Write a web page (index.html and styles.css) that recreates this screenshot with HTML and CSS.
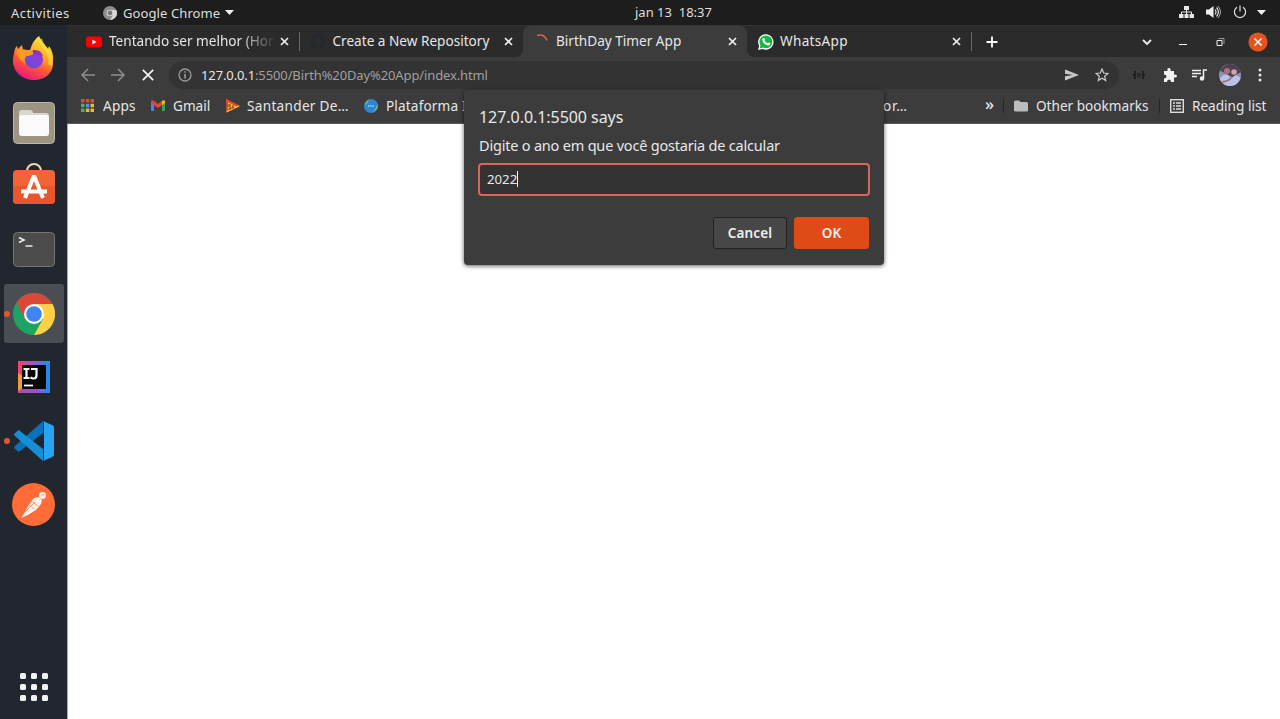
FILE: index.html
```html
<!DOCTYPE html>
<html lang="pt">
<head>
<meta charset="utf-8">
<title>BirthDay Timer App</title>
<link rel="stylesheet" href="styles.css">
</head>
<body>
<header class="topbar">
  <span class="activities">Activities</span>
  <div class="appmenu">
    <svg width="14" height="14" viewBox="0 0 14 14"><circle cx="7" cy="7" r="7" fill="#8c8c8c"/><path d="M7 4h6.3A7 7 0 0 1 7 14l3-5z" fill="#d8d8d8"/><circle cx="7" cy="7" r="3.300" fill="#ddd"/><circle cx="7" cy="7" r="2.400" fill="#777"/></svg>
    <span class="appname">Google Chrome</span>
    <svg width="9" height="5" viewBox="0 0 9 5"><path d="M0 0h9L4.500 5z" fill="#eee"/></svg>
  </div>
  <span class="clock">jan 13&nbsp; 18:37</span>
  <div class="status">
    <svg width="15" height="14" viewBox="0 0 15 14" fill="#e8e8e8"><path d="M5 1h5v4H5zM0 9h4.500v4H0zM5.500 9h4v4h-4zM10.500 9H15v4h-4.500z"/><path d="M7.500 5v4M2.500 9V7h10v2" fill="none" stroke="#e8e8e8"/></svg>
    <svg width="15" height="14" viewBox="0 0 15 14"><path d="M0 4.500h3L7.500 1v12L3 9.500H0z" fill="#eee"/><path d="M9 4.500q2 2.500 0 5M10.500 2.500q4 4.500 0 9" fill="none" stroke="#e0e0e0" stroke-width="1.200"/><path d="M12 1q5 6 0 12" fill="none" stroke="#aaa"/></svg>
    <svg width="14" height="14" viewBox="0 0 14 14" fill="none" stroke="#ddd" stroke-width="1.200"><path d="M4 2.200a5.600 5.600 0 1 0 6 0M7 .5v6"/></svg>
    <svg class="caret" width="9" height="5" viewBox="0 0 9 5"><path d="M0 0h9L4.500 5z" fill="#eee"/></svg>
  </div>
</header>
<div class="desktop">
  <nav class="dock">
    <div class="tile">
      <svg width="44" height="44" viewBox="0 0 44 44">
        <defs>
          <linearGradient id="fox" x1=".8" y1="0" x2=".35" y2="1"><stop offset="0" stop-color="#fff040"/><stop offset=".38" stop-color="#ffad20"/><stop offset=".68" stop-color="#ff5436"/><stop offset="1" stop-color="#e8177e"/></linearGradient>
          <linearGradient id="globe" x1="0" y1="1" x2="1" y2="0"><stop offset="0" stop-color="#5552d4"/><stop offset="1" stop-color="#a934e3"/></linearGradient>
        </defs>
        <path d="M2 17Q3 11 5 10l1 3 4-4 1 5h7q3-10 9-14 2 5 5 8l4 5 1-3q5 7 4 15C42 37 33 44 22 44S0 36 1 23z" fill="url(#fox)"/>
        <circle cx="22" cy="23.500" r="9" fill="url(#globe)"/>
        <path d="M5 15q5-3 10-1l7 2q1 3-7 4c-3 1-3 5-1 8-6-3-9-8-9-13z" fill="#ff9b22"/>
        <path d="M21 14q8-1 10 6l-2-1q2 3 1 6-3-7-9-7z" fill="#8a36c8"/>
        <path d="M28 3q2 7 7 11 5 7 3 15" fill="none" stroke="#ffe044" stroke-width="4" opacity=".65"/>
      </svg>
    </div>
    <div class="tile">
      <svg width="42" height="42" viewBox="0 0 42 42"><rect x=".5" y=".5" width="41" height="41" rx="4" fill="#9b9582" stroke="#bbb6a6"/><path d="M6 11q0-3 3-3h8q3 0 3 3h13q3 0 3 3v17q0 3-3 3H9q-3 0-3-3z" fill="#d9d6cc"/><rect x="6" y="13" width="30" height="21" rx="3" fill="#fafafa"/></svg>
    </div>
    <div class="tile bag">
      <svg width="42" height="42" viewBox="0 0 42 42"><path d="M14 10V8a7 7 0 0 1 14 0v2" fill="none" stroke="#e8dcae" stroke-width="2"/><rect y="7" width="42" height="34" rx="4" fill="#f26335"/><path d="M0 23h42v14a4 4 0 0 1-4 4H4a4 4 0 0 1-4-4z" fill="#e9562b"/><path d="M12 35l8.500-21h1L30 35M8 28.500h26" fill="none" stroke="#fff" stroke-width="4"/></svg>
    </div>
    <div class="tile">
      <svg width="42" height="35" viewBox="0 0 42 35"><rect x=".5" y=".5" width="41" height="34" rx="4" fill="#4b4b4b" stroke="#747474"/><path d="M6 5.500l5 2.500-5 2.500M12.500 14h7" fill="none" stroke="#eee" stroke-width="1.600"/></svg>
    </div>
    <div class="tile active">
      <i class="dot"></i>
      <svg width="42" height="42" viewBox="0 0 42 42"><circle cx="21" cy="21" r="21" fill="#1da462"/><path d="M21 11h18.500A21 21 0 0 1 21 42l9-16z" fill="#fdd047"/><path d="M3.500 9.500L12 26l9-15h18.500A21 21 0 0 0 3.500 9.500z" fill="#d94838"/><circle cx="21" cy="21" r="10" fill="#fff"/><circle cx="21" cy="21" r="7.800" fill="#4084f3"/></svg>
    </div>
    <div class="tile">
      <svg width="32" height="32" viewBox="0 0 32 32"><defs><linearGradient id="ij"><stop offset="0" stop-color="#fe3c71"/><stop offset=".5" stop-color="#9b57c9"/><stop offset="1" stop-color="#168ff0"/></linearGradient></defs><path d="M0 0h32v32H0z" fill="url(#ij)"/><path d="M0 12l5 3v12l-5 3z" fill="#f39b2d"/><path d="M3 28h12l10 4H0z" fill="#a151bd"/><path d="M4 4h24v24H4z" fill="#080808"/><path d="M5.500 8h6M8.500 8v9M5.500 17h6M13 8h5.500v6.500q0 3-3 3-1.500 0-3-1.200" fill="none" stroke="#fff" stroke-width="2.200"/><path d="M6 24.500h9" stroke="#fff" stroke-width="1.800"/></svg>
    </div>
    <div class="tile">
      <i class="dot"></i>
      <svg width="40" height="40" viewBox="0 0 40 40"><path d="M0 27l4 3.500q1 .5 2-.5L29 12V0L1 25q-1 1-1 2z" fill="#0873ba"/><path d="M0 13l4-3.500q1-.5 2 .5l23 18v12L1 15q-1-1-1-2z" fill="#168fd5"/><path d="M29 0l9 4q2 1 2 2v28q0 1-2 2l-9 4q1-1 1-3V3q0-2-1-3z" fill="#27a5f2"/></svg>
    </div>
    <div class="tile">
      <svg width="43" height="43" viewBox="0 0 43 43"><circle cx="21.500" cy="21.500" r="21.500" fill="#ff6c37"/><circle cx="30.500" cy="12.500" r="3.400" fill="#fff1ea"/><path d="M22 15l5-1 3 3-1 4-5 6-5 3-3 2-7 3 4-6 3-6 3-4z" fill="#fff1ea"/><path d="M19 18l7 5M16.500 22l6 4M13 29l10-10M29.500 12.500l3-1" stroke="#f39a76"/></svg>
    </div>
    <div class="appgrid"><i></i><i></i><i></i><i></i><i></i><i></i><i></i><i></i><i></i></div>
  </nav>
  <main class="browser">
    <div class="tabs">
      <div class="tab">
        <svg width="16" height="16" viewBox="0 0 16 16"><rect x="0" y="2.500" width="16" height="11" rx="3" fill="#f00"/><path d="M6.300 5.500v5l4.200-2.500z" fill="#fff"/></svg>
        <span class="title fade t1">Tentando ser melhor (Hor</span>
        <svg class="x" width="9" height="9" viewBox="0 0 9 9"><path d="M1 1l7 7M8 1L1 8"/></svg>
      </div>
      <div class="tab divided before">
        <svg width="16" height="16" viewBox="0 0 16 16"><path d="M6 14.500v-3q-4-1-3-5l1-4 2 1h4l2-1 1 4q1 4-3 5v3A7 7 0 1 0 6 14.500" fill="none" stroke="#24292f" stroke-width="1.500"/></svg>
        <span class="title t2">Create a New Repository</span>
        <svg class="x" width="9" height="9" viewBox="0 0 9 9"><path d="M1 1l7 7M8 1L1 8"/></svg>
      </div>
      <div class="slot"><div class="tab current">
        <svg width="16" height="16" viewBox="0 0 16 16"><path d="M3 1.500q7-2 10 5" fill="none" stroke="#e0605a" stroke-width="1.600"/></svg>
        <span class="title t3">BirthDay Timer App</span>
        <svg class="x" width="9" height="9" viewBox="0 0 9 9"><path d="M1 1l7 7M8 1L1 8"/></svg>
      </div></div>
      <div class="tab after">
        <svg width="16" height="16" viewBox="0 0 16 16"><path d="M0 16l1.200-4A7.700 7.700 0 1 1 4.500 15z" fill="#fff"/><path d="M1.700 14.400l.8-3A6.400 6.400 0 1 1 5 13.600z" fill="#12b93e"/><path d="M5 4q1-.6 1.600.5.6 1.400 0 2 1 2 3 2.700l1-.8 1.800 1q-.2 2-2.300 2Q5 10.500 4.300 6 4.200 4.500 5 4z" fill="#fff"/></svg>
        <span class="title t4">WhatsApp</span>
        <svg class="x" width="9" height="9" viewBox="0 0 9 9"><path d="M1 1l7 7M8 1L1 8"/></svg>
      </div>
      <div class="newtab"><svg width="12" height="12" viewBox="0 0 12 12"><path d="M6 .5v11M.5 6h11" stroke="#fff" stroke-width="1.800"/></svg></div>
      <div class="winctl">
        <svg width="10" height="10" viewBox="0 0 10 10"><path d="M1 3l4 4 4-4" fill="none" stroke="#eee" stroke-width="1.800"/></svg>
        <svg width="8" height="10" viewBox="0 0 8 10"><path d="M0 7.500h8" stroke="#fff"/></svg>
        <svg width="9" height="10" viewBox="0 0 9 10" fill="none"><path d="M1 3.500h5v5H1z" stroke="#eee"/><path d="M2.500 1.500h5.500V7" stroke="#999"/></svg>
        <svg width="20" height="20" viewBox="0 0 20 20"><circle cx="10" cy="10" r="9.600" fill="#e35420"/><path d="M6.500 6.500l7 7M13.500 6.500l-7 7" stroke="#fff" stroke-width="1.500"/></svg>
      </div>
    </div>
    <div class="toolbar">
      <div class="navbtns">
        <svg width="14" height="14" viewBox="0 0 14 14" fill="none" stroke="#8e8e8e" stroke-width="1.500"><path d="M14 7H1.500M7 1L1 7l6 6"/></svg>
        <svg width="14" height="14" viewBox="0 0 14 14" fill="none" stroke="#8e8e8e" stroke-width="1.500"><path d="M0 7h12.500M7 1l6 6-6 6"/></svg>
        <svg width="12" height="12" viewBox="0 0 12 12" stroke="#f4f4f4" stroke-width="1.700"><path d="M.8.800l10.400 10.400M11.200.800L.8 11.200"/></svg>
      </div>
      <div class="omnibox">
        <svg width="14" height="14" viewBox="0 0 14 14"><circle cx="7" cy="7" r="6" fill="none" stroke="#9b9b9b" stroke-width="1.300"/><path d="M7 6v4.500M7 3.300v1.500" stroke="#aaa" stroke-width="1.400"/></svg>
        <span class="url"><b>127.0.0.1</b><span>:5500/Birth%20Day%20App/index.html</span></span>
        <svg class="send" width="14" height="12" viewBox="0 0 14 12"><path d="M0 .5L14 6 0 11.500V7.300L8 6 0 4.700z" fill="#c8c8c8"/></svg>
        <svg width="14" height="14" viewBox="0 0 14 14"><path d="M7 1l1.700 4 4.300.4-3.300 2.800 1 4.300L7 10.200l-3.700 2.300 1-4.300L1 5.400 5.300 5z" fill="none" stroke="#ccc" stroke-width="1.200"/></svg>
      </div>
      <div class="ext">
        <svg width="12" height="8" viewBox="0 0 12 8" fill="none" stroke="#141414" stroke-width="1.200"><path d="M3 .6H2V3.300L.5 4 2 4.700v2.700h1M9 .6h1v2.700l1.500.7-1.500.7v2.700H9M4 3h4M4 5h4"/></svg>
        <svg width="14" height="14" viewBox="0 0 14 14"><path d="M1 3h3.500q-.6-3 1.500-3t1.500 3H11v3.500q3-.4 3 1.500t-3 1.500V14H8q0-2.500-2-2.500T4 14H1v-3.500q2.500 0 2.500-2T1 6.500z" fill="#f1f1f1"/></svg>
        <svg width="15" height="12" viewBox="0 0 15 12"><path d="M0 1.500h9M0 4.500h9M0 7.500h5M11.500 9.500V1H15" fill="none" stroke="#eee" stroke-width="1.500"/><circle cx="10" cy="9.500" r="2.200" fill="#eee"/></svg>
        <svg class="avatar" width="22" height="22" viewBox="0 0 22 22"><path d="M0 0h22v22H0z" fill="#8f91b4"/><path d="M0 6l8-6h10l4 8-9 5z" fill="#533e50"/><circle cx="8" cy="7" r="3" fill="#a87578"/><circle cx="15" cy="8" r="2.800" fill="#d0a5a5"/><path d="M1 14q4-5 8-3l3 4 5-4 5 3v8H0z" fill="#b9c2ea"/><path d="M3 18q7-1 9-4" fill="none" stroke="#a97581" stroke-width="2"/></svg>
        <svg width="4" height="14" viewBox="0 0 4 14" fill="#e5e5e5"><circle cx="2" cy="2" r="1.500"/><circle cx="2" cy="7" r="1.500"/><circle cx="2" cy="12" r="1.500"/></svg>
      </div>
    </div>
    <div class="bookmarks">
      <svg class="apps" width="13" height="13" viewBox="0 0 13 13"><path d="M0 0h3.500v3.500H0zM4.800 0h3.500v3.500H4.800zM9.500 0H13v3.500H9.500z" fill="#e3493c"/><path d="M0 4.800h3.500v3.500H0zM0 9.500h3.500V13H0z" fill="#4fae5c"/><path d="M4.800 4.800h3.500v3.500H4.800z" fill="#4794ef"/><path d="M9.500 4.800H13v3.500H9.500zM4.800 9.500h3.500V13H4.800zM9.500 9.500H13V13H9.500z" fill="#ecb643"/></svg>
      <span class="b1">Apps</span>
      <svg class="gm" width="14" height="11" viewBox="0 0 14 11"><path d="M0 2l3 2v7H1q-1 0-1-1z" fill="#4285f4"/><path d="M14 2l-3 2v7h2q1 0 1-1z" fill="#34a853"/><path d="M0 2Q0-1 3 1l4 3 4-3q3-2 3 1v1L7 8 0 3z" fill="#ea4335"/><path d="M11 1q3-2 3 1v1l-3 2z" fill="#fbbc04"/></svg>
      <span class="b2">Gmail</span>
      <svg class="sa" width="14" height="14" viewBox="0 0 14 14"><path d="M0 0l14 7L0 14z" fill="#c9682b"/><path d="M0 0l14 7-3 1.500L0 3z" fill="#e84a23"/><path d="M2 4l8 4M1 12.500L13 7M1 9.500l6-3" stroke="#f2cf38" stroke-width="1.300"/><path d="M1 4v7M4 5v6M7 6v4" stroke="#9b382a"/></svg>
      <span class="b3">Santander De…</span>
      <svg class="pl" width="14" height="14" viewBox="0 0 14 14"><circle cx="7" cy="7" r="7" fill="#2e86d3"/><path d="M5 .5q-4 2-4 6 3-2 4-6zM13.200 5q2 5-4.500 8.500 3.500-4 4.500-8.500z" fill="#6bbd79"/><path d="M4 7h6" stroke="#7cc3ee" stroke-width="2" stroke-dasharray="1.500 .7"/></svg>
      <span class="b4">Plataforma I</span>
      <span class="b5">or…</span>
      <span class="more">»</span>
      <i class="vsep"></i>
      <svg class="fo" width="14" height="12" viewBox="0 0 14 12"><path d="M0 2q0-1.500 1.500-1.500H5L6.500 2h6Q14 2 14 3.500v6.800q0 1.200-1.500 1.200h-11Q0 11.500 0 10.300z" fill="#bdbdbd"/></svg>
      <span class="b6">Other bookmarks</span>
      <i class="vsep"></i>
      <svg class="rl" width="14" height="14" viewBox="0 0 14 14" fill="none" stroke="#ddd"><rect x=".7" y=".7" width="12.600" height="12.600" stroke-width="1.400"/><path d="M3 4h2M3 7h2M3 10h2M6 4h5M6 7h5M6 10h5" stroke-width="1.400"/></svg>
      <span class="b7">Reading list</span>
    </div>
    <section class="page"></section>
    <div class="dialog" role="dialog">
      <h1>127.0.0.1:5500 says</h1>
      <p>Digite o ano em que você gostaria de calcular</p>
      <div class="field"><span>2022</span><i></i></div>
      <div class="actions"><button class="cancel">Cancel</button><button class="ok">OK</button></div>
    </div>
  </main>
</div>
</body>
</html>
```

FILE: styles.css
```css
* { box-sizing: border-box; }
body { margin: 0; width: 1280px; height: 719px; overflow: hidden; display: flex; flex-direction: column; background: #fff; color: #e6e6e6; font: 13.600px/20px "Noto Sans", "Open Sans", sans-serif; white-space: nowrap; }
svg { display: block; flex: none; }
.topbar { height: 25px; flex: none; background: #1d1d1d; display: grid; grid-template-columns: 103px 532px 1fr auto; align-items: center; font-size: 13px; color: #dedede; }
.activities { padding-left: 11px; letter-spacing: .45px; }
.appmenu { display: flex; align-items: center; }
.appname { width: 102px; margin-left: 6px; letter-spacing: .1px; }
.clock { padding-bottom: 1px; }
.status { display: flex; align-items: center; gap: 12px; padding: 0 14px 1px 0; }
.status .caret { margin-left: -2px; }

.desktop { flex: 1; display: flex; min-height: 0; }
.dock { width: 67px; flex: none; background: #22262f; display: flex; flex-direction: column; align-items: center; padding-top: 4px; gap: 4px; }
.tile { position: relative; width: 60px; height: 59.700px; display: grid; place-items: center; border-radius: 3px; }
.tile:first-child { padding-bottom: 2px; }
.bag { padding-bottom: 4px; }
.active { background: #4b4d54; }
.dot { position: absolute; left: 0; top: 27px; width: 6px; height: 6px; border-radius: 50%; background: #e5562c; }
.appgrid { margin: auto 0 18px; display: grid; grid-template-columns: repeat(3, 6px); grid-auto-rows: 6px; gap: 5px; }
.appgrid i { border-radius: 1.500px; background: #f2f2f2; }

.browser { position: relative; flex: 1; min-width: 0; display: flex; flex-direction: column; }
.tabs { height: 32px; flex: none; display: flex; background: #3c3c3c; border-top: 1px solid #333; }
.tab { width: 224px; display: flex; align-items: center; padding: 0 10px 0 11px; background: #2b2b2b; }
.tab:first-child { padding-left: 11px; }
.tabs > .tab:first-child { width: 232px; padding-left: 19px; }
.title { width: 164px; height: 22px; margin-left: 6px; overflow: hidden; }
.t1 { margin-left: 7px; width: 165px; }
.t2 { padding-left: .5px; }
.t4 { letter-spacing: .3px; }
.fade { -webkit-mask-image: linear-gradient(90deg, #000 130px, transparent 168px); mask-image: linear-gradient(90deg, #000 130px, transparent 168px); }
.x { margin-left: auto; stroke: #f0f0f0; stroke-width: 1.700; }
.divided { background: linear-gradient(#686868, #686868) left center / 1px 19px no-repeat #2b2b2b; }
.before { border-bottom-right-radius: 7px; }
.after { border-bottom-left-radius: 7px; }
.slot { background: linear-gradient(#2b2b2b 50%, #3c3c3c 50%); display: flex; }
.current { background: #3c3c3c; border-radius: 7px 7px 0 0; }
.newtab { width: 42px; display: grid; place-items: center; background: linear-gradient(#686868, #686868) left center / 1px 19px no-repeat #2b2b2b; }
.winctl { flex: 1; justify-content: flex-end; background: #2b2b2b; padding-right: 12px; display: flex; align-items: center; }
.winctl svg:nth-child(2) { margin-left: 27px; }
.winctl svg:nth-child(3) { margin-left: 29px; }
.winctl svg:nth-child(4) { margin-left: 23px; }

.toolbar { height: 36px; flex: none; background: #3c3c3c; display: flex; align-items: center; }
.navbtns { width: 102px; padding-left: 14px; display: flex; align-items: center; gap: 16px; }
.navbtns svg:last-child { margin-left: 1px; }
.omnibox { width: 950px; height: 28px; border-radius: 14px; background: #333; display: flex; align-items: center; padding: 0 10px 0 9px; }
.url { margin: 0 0 1px 9px; color: #a0a0a0; font-size: 13px; letter-spacing: -.12px; }
.url b { color: #e6e6e6; font-weight: 400; }
.send { margin: 0 16px 0 auto; }
.ext { display: flex; align-items: center; margin-left: 14px; gap: 15px; }
.ext svg:nth-child(2) { margin-left: 3px; }
.avatar { border-radius: 50%; margin: 0 2px 0 -3px; }

.bookmarks { height: 31px; flex: none; background: #3c3c3c; border-bottom: 1px solid #595959; display: flex; align-items: center; padding: 0 0 5px 14px; }
.b1 { width: 48px; margin-left: 9px; letter-spacing: .2px; }
.b2 { width: 53px; margin-left: 8px; }
.b3 { width: 117px; margin-left: 7px; letter-spacing: .3px; }
.b4 { width: 88px; margin-left: 8px; letter-spacing: .15px; }
.b5 { margin-left: 409px; letter-spacing: .8px; }
.more { margin-left: auto; width: 18px; font-size: 17px; font-weight: 500; padding-bottom: 3px; }
.vsep { width: 1px; height: 14px; background: #262626; }
.fo { margin-left: 10px; }
.b6 { width: 123px; margin-left: 8px; }
.rl { margin-left: 10px; }
.b7 { width: 88px; margin-left: 8px; }
.page { flex: 1; background: #fff; border-left: 1px solid #aaa; }

.dialog { position: absolute; left: 397px; top: 65px; width: 420px; height: 175px; padding: 16px 15px; background: #3c3c3c; border-radius: 4px; box-shadow: 0 1px 4px rgba(0, 0, 0, .65); display: flex; flex-direction: column; color: #e8e8e8; }
.dialog h1 { margin: 0; font-size: 16px; font-weight: 400; line-height: 22px; letter-spacing: -.05px; }
.dialog p { margin: 7px 0 8px; font-size: 14.500px; line-height: 20px; letter-spacing: -.2px; }
.field { height: 34px; margin: 0 -1px; border: 2px solid #d9655b; border-radius: 4px; background: #333; display: flex; align-items: center; padding: 0 0 1px 7px; font-size: 13.200px; }
.field i { width: 1px; height: 16px; background: #fff; }
.actions { display: flex; justify-content: flex-end; gap: 7px; margin-top: 21px; }
button { width: 75px; height: 32px; padding: 0; border: 1px solid #222; border-radius: 3px; background: #474747; color: #f0f0f0; font: 600 13.500px "Noto Sans", sans-serif; letter-spacing: .15px; }
.cancel { width: 74px; }
.ok { background: #df4a16; border-color: #df4a16; }
```
